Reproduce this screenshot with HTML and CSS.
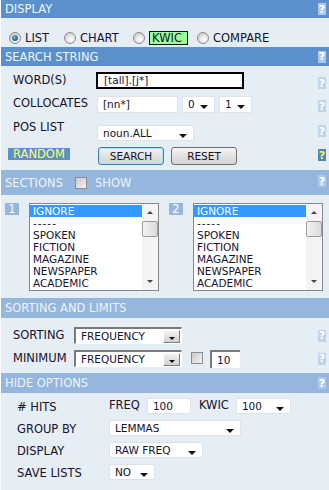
FILE: index.html
```html
<!DOCTYPE html>
<html lang="en">
<head>
  <meta charset="utf-8">
  <meta name="viewport" content="width=device-width, initial-scale=1">
  <link rel="stylesheet" href="styles.css">
</head>
<body>
<div class="panel">

  <!-- display -->
  <div class="head dark h-display">
    <span>DISPLAY</span>
    <span class="help">?</span>
  </div>
  <div class="box display-row">
    <label class="opt"><span class="radio on"></span>LIST</label>
    <label class="opt"><span class="radio"></span>CHART</label>
    <label class="opt"><span class="radio"></span><span class="kwic">KWIC</span></label>
    <label class="opt"><span class="radio"></span>COMPARE</label>
  </div>

  <!-- search string -->
  <div class="head dark">
    <span>SEARCH STRING</span>
    <span class="help">?</span>
  </div>
  <div class="box search">
    <div class="row r-word">
      <span class="label">WORD(S)</span>
      <span class="field word">[tall].[j*]</span>
      <span class="help pale">?</span>
    </div>
    <div class="row r-coll">
      <span class="label">COLLOCATES</span>
      <span class="field coll">[nn*]</span>
      <span class="select s-num">0<i class="tri"></i></span>
      <span class="select s-num">1<i class="tri"></i></span>
      <span class="help pale">?</span>
    </div>
    <div class="row r-pos">
      <span class="label">POS LIST</span>
      <span class="select s-pos">noun.ALL<i class="tri"></i></span>
      <span class="help pale">?</span>
    </div>
    <div class="row r-btn">
      <span class="label"><span class="random">RANDOM</span></span>
      <button class="btn focus">SEARCH</button>
      <button class="btn">RESET</button>
      <span class="help yellow">?</span>
    </div>
  </div>

  <!-- sections -->
  <div class="head h-sections">
    <span class="head-left">SECTIONS <span class="check"></span> SHOW</span>
    <span class="help">?</span>
  </div>
  <div class="box sections">
    <span class="num">1</span>
    <div class="listbox">
      <ul>
        <li class="sel">IGNORE</li>
        <li class="dash">-----</li>
        <li>SPOKEN</li>
        <li>FICTION</li>
        <li>MAGAZINE</li>
        <li>NEWSPAPER</li>
        <li>ACADEMIC</li>
      </ul>
      <div class="scroll">
        <span class="arr up"></span>
        <span class="thumb"></span>
        <span class="arr down"></span>
      </div>
    </div>
    <span class="num">2</span>
    <div class="listbox">
      <ul>
        <li class="sel">IGNORE</li>
        <li class="dash">-----</li>
        <li>SPOKEN</li>
        <li>FICTION</li>
        <li>MAGAZINE</li>
        <li>NEWSPAPER</li>
        <li>ACADEMIC</li>
      </ul>
      <div class="scroll">
        <span class="arr up"></span>
        <span class="thumb"></span>
        <span class="arr down"></span>
      </div>
    </div>
  </div>

  <!-- sorting -->
  <div class="head h-sort">
    <span>SORTING AND LIMITS</span>
  </div>
  <div class="box sorting">
    <div class="row">
      <span class="label">SORTING</span>
      <span class="classic">FREQUENCY<i class="drop"><i class="tri"></i></i></span>
      <span class="help pale">?</span>
    </div>
    <div class="row">
      <span class="label">MINIMUM</span>
      <span class="classic">FREQUENCY<i class="drop"><i class="tri"></i></i></span>
      <span class="check"></span>
      <span class="inset">10</span>
      <span class="help pale">?</span>
    </div>
  </div>

  <!-- hide options -->
  <div class="head h-hide">
    <span>HIDE OPTIONS</span>
    <span class="help">?</span>
  </div>
  <div class="box hide">
    <div class="row">
      <span class="label">#&nbsp;HITS</span>
      <span class="word-label">FREQ</span>
      <span class="field freq">100</span>
      <span class="word-label kw">KWIC</span>
      <span class="select s-kwic">100<i class="tri"></i></span>
    </div>
    <div class="row">
      <span class="label">GROUP BY</span>
      <span class="select s-group">LEMMAS<i class="tri"></i></span>
    </div>
    <div class="row">
      <span class="label">DISPLAY</span>
      <span class="select s-disp">RAW FREQ<i class="tri"></i></span>
    </div>
    <div class="row">
      <span class="label">SAVE LISTS</span>
      <span class="select s-save">NO<i class="tri"></i></span>
    </div>
  </div>

</div>
</body>
</html>
```

FILE: styles.css
```css
* {
  box-sizing: border-box;
}
body {
  margin: 0;
  background: #fff;
  font-family: "DejaVu Sans", Verdana, sans-serif;
  font-size: 11.5px;
  color: #16122f;
}
.panel {
  margin-left: 1px;
  height: 490px;
  background: #e5edf5;
}



/* section headers */
.head {
  display: flex;
  align-items: center;
  justify-content: space-between;
  height: 20px;
  padding: 0 3px 0 4px;
  color: #eef3fa;
  background: #95b6dd;
}
.head.dark {
  height: 19px;
  background: #5c90cc;
}
.head.h-display {
  height: 18px;
}
.h-sections {
  height: 25px;
  align-items: flex-start;
  padding-top: 5px;
}
.head-left {
  display: flex;
  align-items: center;
  margin-top: 1px;
}
.head-left .check {
  margin: 0 8px 0 12px;
}

.help {
  display: inline-flex;
  align-items: center;
  justify-content: center;
  width: 8px;
  height: 12px;
  font-weight: bold;
  font-size: 11px;
  color: #fff;
  background: #b0c8e6;
}
.help.pale {
  background: #bfd3ec;
}
.help.yellow {
  color: #ffff33;
  background: #4f86c6;
}



/* display row */
.display-row {
  display: grid;
  grid-template-columns: 55px 69px 64px auto;
  align-items: center;
  height: 29px;
  padding: 11px 0 0 8px;
}
.opt {
  display: flex;
  align-items: center;
  gap: 4px;
  height: 13px;
}
.radio {
  width: 12px;
  height: 12px;
  border-radius: 50%;
  border: 1px solid #8c8c8c;
  background: radial-gradient(circle at 60% 65%, #fff 0%, #e6e6e6 45%, #b8b8b8 100%);
  position: relative;
}
.radio.on::after {
  content: "";
  position: absolute;
  left: 2px;
  top: 2px;
  width: 6px;
  height: 6px;
  border-radius: 50%;
  background: radial-gradient(circle at 40% 35%, #6fb3ea 0%, #1f5f99 70%, #123f6a 100%);
}
.kwic {
  display: inline-block;
  width: 39px;
  height: 14px;
  line-height: 12px;
  padding-left: 2px;
  border: 1px solid #111;
  background: #99ff99;
}



/* generic rows */
.row {
  display: flex;
  align-items: flex-start;
}
.row > .help {
  margin-left: auto;
}
.label {
  flex: none;
  line-height: 13px;
}

.field,
.select {
  position: relative;
  display: inline-block;
  height: 17px;
  line-height: 15px;
  padding-left: 5px;
  font-size: 10.5px;
  background: #fff;
  border: 1px solid #dde3ea;
}
.tri {
  position: absolute;
  right: 6px;
  top: 8px;
  width: 0;
  height: 0;
  border-left: 4px solid transparent;
  border-right: 4px solid transparent;
  border-top: 4px solid #111;
}



/* search string */
.search {
  height: 104px;
  padding: 6px 3px 0 12px;
}
.search .label {
  width: 83px;
}
.r-word {
  height: 17px;
}
.r-word .label {
  padding-top: 2px;
}
.field.word {
  width: 148px;
  border: 2px solid #000;
  line-height: 13px;
  padding-left: 6px;
}
.r-word .help {
  margin-top: 5px;
}
.r-coll {
  margin-top: 7px;
}
.r-coll .label {
  padding-top: 1px;
}
.field.coll {
  width: 81px;
  margin-left: 1px;
}
.s-num {
  width: 33px;
  margin-left: 4px;
}
.r-coll .help {
  margin-top: 4px;
}
.r-pos {
  margin-top: 8px;
}
.s-pos {
  width: 97px;
  height: 16px;
  margin: 4px 0 0 1px;
}
.r-pos .help {
  margin-top: 4px;
}
.r-btn {
  margin-top: 6px;
}
.random {
  display: inline-block;
  margin: 1px 0 0 -5px;
  padding: 0 5px;
  height: 12px;
  line-height: 12px;
  color: #ffff66;
  background: #5c90cc;
}
.btn {
  width: 66px;
  height: 18px;
  margin: 0 7px 0 2px;
  padding: 0;
  font-family: inherit;
  font-size: 10.5px;
  color: #16122f;
  border: 1px solid #707070;
  border-radius: 3px;
  background: linear-gradient(#f4f4f4, #e2e2e2 50%, #d4d4d4);
}
.btn + .btn {
  margin-left: 0;
}
.btn.focus {
  border-color: #3c7fb1;
  box-shadow: inset 0 0 0 1px #aee0f6;
}
.r-btn .help {
  margin-top: 2px;
}



/* sections */
.sections {
  display: flex;
  gap: 10px;
  height: 103px;
  padding: 8px 0 0 4px;
}
.num {
  width: 14px;
  height: 12px;
  line-height: 12px;
  text-align: center;
  color: #fff;
  background: #95b6dd;
}
.listbox {
  display: flex;
  width: 130px;
  height: 88px;
  border: 1px solid #828790;
  background: #fff;
}
.listbox ul {
  flex: 1;
  margin: 0;
  padding: 1px 0 0;
  list-style: none;
  font-size: 10.5px;
}
.listbox li {
  height: 12px;
  line-height: 12px;
  padding-left: 3px;
  white-space: nowrap;
}
.listbox li.sel {
  color: #fff;
  background: #3399ff;
}
.listbox li.dash {
  letter-spacing: 1px;
}
.scroll {
  display: flex;
  flex-direction: column;
  width: 16px;
  background: #f4f4f4;
}
.arr {
  position: relative;
  height: 17px;
}
.arr::after {
  content: "";
  position: absolute;
  left: 5px;
  top: 7px;
  border-left: 3px solid transparent;
  border-right: 3px solid transparent;
}
.arr.up::after {
  border-bottom: 3px solid #444;
}
.arr.down {
  margin-top: auto;
}
.arr.down::after {
  border-top: 3px solid #444;
}
.thumb {
  height: 16px;
  border: 1px solid #9c9c9c;
  border-radius: 2px;
  background: linear-gradient(90deg, #f2f2f2, #dcdcdc);
}



/* sorting */
.sorting {
  height: 55px;
  padding: 9px 3px 0 12px;
}
.sorting .row {
  height: 17px;
  align-items: center;
}
.sorting .row + .row {
  margin-top: 6px;
}
.sorting .label {
  width: 61px;
}
.classic {
  position: relative;
  width: 108px;
  height: 17px;
  line-height: 14px;
  padding-left: 5px;
  font-size: 10.5px;
  background: #fff;
  border-top: 2px solid #7a7a7a;
  border-left: 2px solid #7a7a7a;
  border-right: 1px solid #fff;
  border-bottom: 1px solid #fff;
}
.drop {
  position: absolute;
  right: 1px;
  top: 1px;
  width: 17px;
  height: 13px;
  border: 1px solid #808080;
  border-top-color: #fff;
  border-left-color: #fff;
  background: linear-gradient(#f2f2f2, #d0d0d0);
}
.drop .tri {
  right: 4px;
  top: 6px;
  border-left-width: 3px;
  border-right-width: 3px;
  border-top-width: 3px;
}
.sorting .check {
  margin: -2px 0 0 9px;
}
.inset {
  width: 30px;
  height: 18px;
  margin-left: 7px;
  padding-left: 5px;
  line-height: 16px;
  font-size: 10.5px;
  background: #fff;
  border-top: 2px solid #7a7a7a;
  border-left: 2px solid #7a7a7a;
}
.check {
  display: inline-block;
  width: 12px;
  height: 12px;
  border: 1px solid #8c8c8c;
  background: linear-gradient(135deg, #c8c8c8, #f4f4f4);
}



/* hide options */
.hide {
  height: 97px;
  padding: 5px 3px 0 16px;
}
.hide .row {
  height: 16px;
  align-items: center;
}
.hide .row + .row {
  margin-top: 6px;
}
.hide .label {
  width: 92px;
  padding-top: 3px;
}
.hide .select {
  height: 16px;
  line-height: 14px;
}
.word-label {
  padding-bottom: 2px;
}
.field.freq {
  width: 44px;
  height: 16px;
  line-height: 14px;
  margin-left: 7px;
}
.word-label.kw {
  margin-left: 8px;
}
.s-kwic {
  width: 55px;
  margin-left: 7px;
}
.s-group {
  width: 132px;
}
.s-disp {
  width: 94px;
}
.s-save {
  width: 46px;
}
```
